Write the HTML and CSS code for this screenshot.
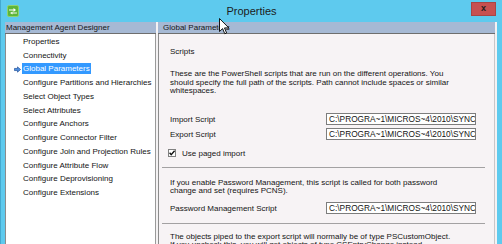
FILE: index.html
```
<!DOCTYPE html>
<html>
<head>
<meta charset="utf-8">
<title>Properties</title>
<link rel="stylesheet" href="styles.css">
</head>
<body>
<div class="window">
  <div class="titlebar">
    <span class="app-icon">
      <svg width="12" height="12" viewBox="0 0 12 12">
        <rect x="0.5" y="0.5" width="11" height="11" rx="1.5" fill="#5db53a" stroke="#8fd46c"/>
        <path d="M2 4.5 H6.5 V3 L9 5 L6.5 7 V5.5 H2 Z" fill="#fff"/>
        <path d="M10 7.5 H5.5 V6.5 L3 8 L5.5 9.5 V8.5 H10 Z" fill="#fff" opacity="0.9"/>
      </svg>
    </span>
    <span class="title">Properties</span>
    <span class="close">x</span>
  </div>
  <div class="main">
    <div class="left">
      <div class="hdr">Management Agent Designer</div>
      <ul class="nav">
        <li><span>Properties</span></li>
        <li><span>Connectivity</span></li>
        <li class="sel">
          <svg class="cur-arrow" width="7" height="7" viewBox="0 0 8 7"><path d="M0.5 2.3 H4 V0.5 L7.5 3.5 L4 6.5 V4.7 H0.5 Z" fill="#4f8fe0" stroke="#1f4f9a" stroke-width="0.8"/></svg>
          <span>Global Parameters</span>
        </li>
        <li><span>Configure Partitions and Hierarchies</span></li>
        <li><span>Select Object Types</span></li>
        <li><span>Select Attributes</span></li>
        <li><span>Configure Anchors</span></li>
        <li><span>Configure Connector Filter</span></li>
        <li><span>Configure Join and Projection Rules</span></li>
        <li><span>Configure Attribute Flow</span></li>
        <li><span>Configure Deprovisioning</span></li>
        <li><span>Configure Extensions</span></li>
      </ul>
    </div>
    <div class="right">
      <div class="hdr hdr-right">Global Parameters</div>
      <div class="content">
        <div class="sec-title">Scripts</div>
        <p class="para p1">These are the PowerShell scripts that are run on the different operations. You<br>should specify the full path of the scripts. Path cannot include spaces or similar<br>whitespaces.</p>
        <div class="field f-import">
          <span class="label">Import Script</span>
          <span class="textbox">C:\PROGRA~1\MICROS~4\2010\SYNC</span>
        </div>
        <div class="field f-export">
          <span class="label">Export Script</span>
          <span class="textbox">C:\PROGRA~1\MICROS~4\2010\SYNC</span>
        </div>
        <div class="check-row">
          <span class="checkbox">
            <svg width="8" height="8" viewBox="0 0 8 8"><path d="M1.6 3.8 L3.2 5.6 L6.6 1.8" fill="none" stroke="#111" stroke-width="1.4"/></svg>
          </span>
          <span class="check-label">Use paged import</span>
        </div>
        <div class="sep s1"></div>
        <p class="para p2">If you enable Password Management, this script is called for both password<br>change and set (requires PCNS).</p>
        <div class="field f-pm">
          <span class="label">Password Management Script</span>
          <span class="textbox">C:\PROGRA~1\MICROS~4\2010\SYNC</span>
        </div>
        <div class="sep s2"></div>
        <p class="para p3">The objects piped to the export script will normally be of type PSCustomObject.<br>If you uncheck this, you will get objects of type CSEntryChange instead.</p>
      </div>
    </div>
  </div>
  <svg class="cursor" width="11" height="17" viewBox="0 0 11 17">
    <path d="M0.5 0.5 V13.5 L3.6 10.6 L5.8 15.8 L7.6 15 L5.5 9.9 L9.8 9.9 Z" fill="#fff" stroke="#000" stroke-width="0.9" stroke-linejoin="round"/>
  </svg>
</div>
</body>
</html>
```
FILE: styles.css
```
* { box-sizing: border-box; }

html, body {
  margin: 0;
  padding: 0;
}

body {
  width: 502px;
  height: 244px;
  overflow: hidden;
  font-family: "Liberation Sans", Arial, sans-serif;
  font-size: 8px;
  color: #141414;
  background: #5ecaee;
}

.window {
  position: relative;
  height: 244px;
  background: #5ecaee;
  padding: 0 5px;
  display: flex;
  flex-direction: column;
  box-shadow: inset 1px 0 0 #45a9cf;
}

.titlebar {
  height: 22px;
  flex: none;
  display: grid;
  grid-template-columns: 1fr auto 1fr;
  align-items: center;
}

.app-icon {
  justify-self: start;
  display: flex;
  margin-left: 2px;
  margin-top: -1px;
}

.title {
  font-size: 11px;
  color: #1c1c1c;
  line-height: 22px;
  padding-left: 1px;
}

.close {
  justify-self: end;
  align-self: start;
  margin-top: 2px;
  margin-right: 1px;
  width: 25px;
  height: 14px;
  background: #c75050;
  border: 1px solid #a94444;
  color: #1e1e1e;
  font-weight: bold;
  font-size: 9px;
  line-height: 11px;
  text-align: center;
}

.main {
  flex: 1;
  min-height: 0;
  display: flex;
  gap: 2px;
  background: #f4f2f3;
}

.left {
  width: 151px;
  flex: none;
  display: flex;
  flex-direction: column;
}

.hdr {
  height: 12px;
  flex: none;
  line-height: 11px;
  background: #a6b9d4;
  border-bottom: 1px solid #6e6e6e;
  padding-left: 1px;
  white-space: nowrap;
  overflow: hidden;
  color: #161616;
}

.hdr-right {
  padding-left: 5px;
}

.nav {
  list-style: none;
  margin: 0;
  padding: 0.5px 0 0;
  flex: 1;
  background: #ffffff;
  border-left: 1px solid #8c8c8c;
  border-right: 1px solid #9a9a9a;
}

.nav li {
  position: relative;
  height: 13.75px;
  display: flex;
  align-items: center;
  padding-left: 16px;
  white-space: nowrap;
}

.nav li span {
  display: inline-block;
  line-height: 11px;
  padding: 0 1px;
}

.nav li.sel span {
  background: #3399ff;
  color: #ffffff;
}

.cur-arrow {
  position: absolute;
  left: 8px;
  top: 4px;
}

.right {
  flex: 1;
  display: flex;
  flex-direction: column;
  margin-right: 2px;
  min-width: 0;
}

.content {
  flex: 1;
  background: #f7f3f5;
  border-left: 1px solid #8c8c8c;
  border-right: 1px solid #c9c6c8;
  padding-left: 11px;
  overflow: hidden;
}

.sec-title {
  margin-top: 13px;
  line-height: 9px;
}

.para {
  margin: 0;
  line-height: 8.7px;
  white-space: nowrap;
}

.p1 { margin-top: 14px; }
.p2 { margin-top: 11px; }
.p3 { margin-top: 9px; }

.field {
  display: flex;
  align-items: center;
  height: 12px;
}

.f-import { margin-top: 17px; }
.f-export { margin-top: 3px; }
.f-pm { margin-top: 6px; }

.label {
  width: 156px;
  flex: none;
  white-space: nowrap;
  padding-top: 1px;
}

.textbox {
  width: 150px;
  height: 12px;
  flex: none;
  background: #ffffff;
  border: 1px solid #7d7d7d;
  font-size: 8.3px;
  line-height: 10px;
  padding-left: 2px;
  white-space: nowrap;
  overflow: hidden;
  color: #141414;
}

.check-row {
  display: flex;
  align-items: center;
  height: 8px;
  margin-top: 9px;
  margin-left: -2px;
}

.checkbox {
  width: 8px;
  height: 8px;
  flex: none;
  background: #ffffff;
  border: 1px solid #808080;
  display: flex;
  align-items: center;
  justify-content: center;
}

.checkbox svg {
  flex: none;
}

.check-label {
  margin-left: 6px;
  line-height: 9px;
}

.sep {
  height: 1px;
  background: #a3a1a2;
  margin-left: -8px;
  width: 323px;
}

.s1 { margin-top: 9.5px; }
.s2 { margin-top: 8.5px; }

.cursor {
  position: absolute;
  left: 219px;
  top: 18px;
}
```
